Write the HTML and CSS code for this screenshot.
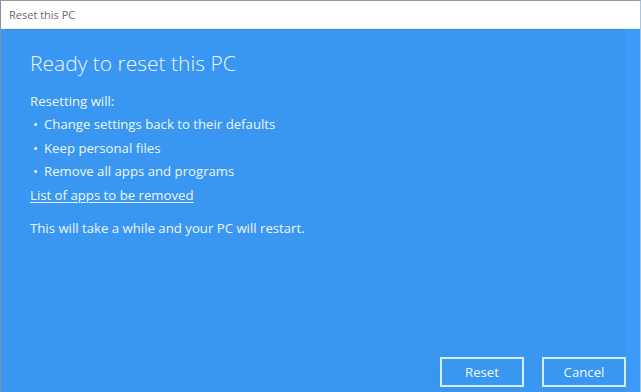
FILE: index.html
```html
<!DOCTYPE html>
<html lang="en">
<head>
  <meta charset="UTF-8" />
  <title>Reset this PC</title>
  <link rel="stylesheet" href="styles.css">
</head>
<body>
  <div class="window">
    <div class="titlebar">Reset this PC</div>
    <div class="content">
      <div class="main">
        <h1>Ready to reset this PC</h1>
        <p class="line">Resetting will:</p>
        <ul class="bullets">
          <li>Change settings back to their defaults</li>
          <li>Keep personal files</li>
          <li>Remove all apps and programs</li>
        </ul>
        <a class="link" href="#">List of apps to be removed</a>
        <p class="note">This will take a while and your PC will restart.</p>
        <div class="actions">
          <button class="btn">Reset</button>
          <button class="btn">Cancel</button>
        </div>
      </div>
      <div class="strip"></div>
    </div>
  </div>
</body>
</html>
```

FILE: styles.css
```css
* { margin: 0; padding: 0; box-sizing: border-box; }
html, body {
  height: 100%;
  background: #fff;
  font-family: "Open Sans", "Noto Sans", sans-serif;
}

.window {
  height: 392px;
  width: 641px;
  display: flex;
  flex-direction: column;
  border-top: 1px solid #9a9a9a;
  border-left: 1px solid #7f93a8;
  border-right: 1px solid #a9c4de;
}

/* title bar */
.titlebar {
  height: 28px;
  padding-left: 8px;
  display: flex;
  align-items: center;
  font-size: 11px;
  color: #6a6a6a;
  background: #fff;
  border-bottom: 1px solid #f3efe6;
}

.content {
  flex: 1;
  display: flex;
  background: #3996f1;
  color: #edf6ff;
}
.main {
  flex: 1;
  display: flex;
  flex-direction: column;
  padding: 20px 0 0 29px;
}
.strip {
  width: 14px;
  background: #3c9bf9;
}

h1 {
  font-weight: 300;
  font-size: 21px;
  line-height: 28px;
  margin-bottom: 13px;
}
.line, .bullets li, .link, .note {
  font-size: 13.2px;
  line-height: 23.4px;
}
.bullets {
  list-style: none;
}
.bullets li::before {
  content: "\2022";
  display: inline-block;
  width: 11px;
  padding-left: 3px;
}
.link {
  color: #edf6ff;
  text-decoration: underline;
  text-underline-offset: 2px;
  align-self: flex-start;
}
.note {
  margin-top: 10px;
}

.actions {
  margin-top: auto;
  display: flex;
  justify-content: flex-end;
  gap: 18px;
  padding: 0 0 5px;
}
.btn {
  width: 84px;
  height: 30px;
  background: transparent;
  border: 2px solid #d6edff;
  color: #f2f8ff;
  font-family: inherit;
  font-size: 13.2px;
}
```
